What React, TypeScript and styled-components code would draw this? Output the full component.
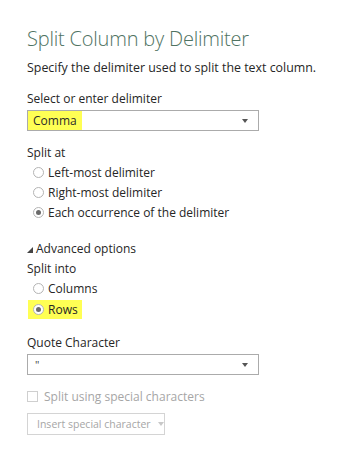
import React from "react";
import styled, { createGlobalStyle } from "styled-components";

const GlobalStyle = createGlobalStyle`
  html, body {
    margin: 0;
    padding: 0;
    background: #ffffff;
  }
  body {
    font-family: "Segoe UI", "Open Sans", "Noto Sans", sans-serif;
    color: #2b2b2b;
  }
`;

const Dialog = styled.div`
  width: 348px;
  height: 455px;
  box-sizing: border-box;
  padding: 26px 0 0 27px;
  background: #ffffff;
`;

const Title = styled.h1`
  margin: 0;
  font-size: 20px;
  font-weight: 300;
  line-height: 26px;
  color: #4f7362;
  letter-spacing: -0.2px;
`;

const Description = styled.p`
  margin: 7px 0 0;
  font-size: 12.4px;
  line-height: 17px;
  color: #262626;
`;

const Label = styled.div<{ $top?: number }>`
  margin-top: ${(p) => p.$top ?? 0}px;
  font-size: 12px;
  line-height: 17px;
  color: #262626;
`;

const Select = styled.div`
  margin-top: 3px;
  width: 232px;
  height: 21px;
  box-sizing: border-box;
  border: 1px solid #ababab;
  display: flex;
  align-items: center;
  justify-content: space-between;
  padding-right: 10px;
`;

const Highlight = styled.span`
  background: #ffff54;
  padding: 0 5px 0 5px;
  height: 19px;
  display: flex;
  align-items: center;
  font-size: 12px;
`;

const Value = styled.span`
  padding-left: 7px;
  font-size: 11px;
  color: #444;
`;

const Caret = styled.span<{ $muted?: boolean }>`
  width: 0;
  height: 0;
  border-left: 3.5px solid transparent;
  border-right: 3.5px solid transparent;
  border-top: 4px solid ${(p) => (p.$muted ? "#c8c8c8" : "#555")};
`;

const RadioList = styled.div`
  display: flex;
  flex-direction: column;
  gap: 3px;
  margin-top: 3px;
  padding-left: 6px;
`;

const RadioRow = styled.div<{ $marked?: boolean }>`
  display: flex;
  align-items: center;
  gap: 4px;
  font-size: 12px;
  color: #262626;
  width: fit-content;
  padding-right: ${(p) => (p.$marked ? 4 : 0)}px;
  margin-left: ${(p) => (p.$marked ? -5 : 0)}px;
  padding-left: ${(p) => (p.$marked ? 5 : 0)}px;
  background: ${(p) => (p.$marked ? "#ffff54" : "transparent")};
  height: ${(p) => (p.$marked ? 19 : 17)}px;
`;

const Radio = styled.span<{ $checked?: boolean }>`
  width: 11px;
  height: 11px;
  box-sizing: border-box;
  border-radius: 50%;
  border: 1px solid #b4b4b4;
  background: #ffffff;
  display: flex;
  align-items: center;
  justify-content: center;
  &::after {
    content: "";
    width: 5px;
    height: 5px;
    border-radius: 50%;
    background: ${(p) => (p.$checked ? "#6a6a6a" : "transparent")};
  }
`;

const Toggle = styled.div`
  margin-top: 19px;
  display: flex;
  align-items: center;
  gap: 3px;
  font-size: 12px;
  line-height: 17px;
  color: #262626;
`;

const Triangle = styled.svg`
  width: 6px;
  height: 6px;
  margin-top: 2px;
`;

const CheckRow = styled.div`
  margin-top: 13px;
  display: flex;
  align-items: center;
  gap: 6px;
  font-size: 12px;
  color: #a6a6a6;
`;

const Checkbox = styled.span`
  width: 11px;
  height: 11px;
  box-sizing: border-box;
  border: 1px solid #cfcfcf;
`;

const Button = styled.div`
  margin-top: 8px;
  width: 138px;
  height: 22px;
  box-sizing: border-box;
  border: 1px solid #d4d4d4;
  display: flex;
  align-items: center;
  gap: 7px;
  padding-left: 9px;
  font-size: 10.5px;
  color: #a6a6a6;
  white-space: nowrap;
`;

const splitAt = [
  { label: "Left-most delimiter", checked: false },
  { label: "Right-most delimiter", checked: false },
  { label: "Each occurrence of the delimiter", checked: true },
];

export default function App() {
  return (
    <>
      <GlobalStyle />
      <Dialog>
        <Title>Split Column by Delimiter</Title>
        <Description>Specify the delimiter used to split the text column.</Description>

        <Label $top={14}>Select or enter delimiter</Label>
        <Select>
          <Highlight>Comma</Highlight>
          <Caret />
        </Select>

        <Label $top={13}>Split at</Label>
        <RadioList>
          {splitAt.map((o) => (
            <RadioRow key={o.label}>
              <Radio $checked={o.checked} />
              {o.label}
            </RadioRow>
          ))}
        </RadioList>

        <Toggle>
          <Triangle viewBox="0 0 6 6">
            <polygon points="6,0 6,6 0,6" fill="#444" />
          </Triangle>
          Advanced options
        </Toggle>
        <Label $top={3}>Split into</Label>
        <RadioList>
          <RadioRow>
            <Radio />
            Columns
          </RadioRow>
          <RadioRow $marked>
            <Radio $checked />
            Rows
          </RadioRow>
        </RadioList>

        <Label $top={15}>Quote Character</Label>
        <Select>
          <Value>"</Value>
          <Caret />
        </Select>

        <CheckRow>
          <Checkbox />
          Split using special characters
        </CheckRow>
        <Button>
          Insert special character
          <Caret $muted />
        </Button>
      </Dialog>
    </>
  );
}
